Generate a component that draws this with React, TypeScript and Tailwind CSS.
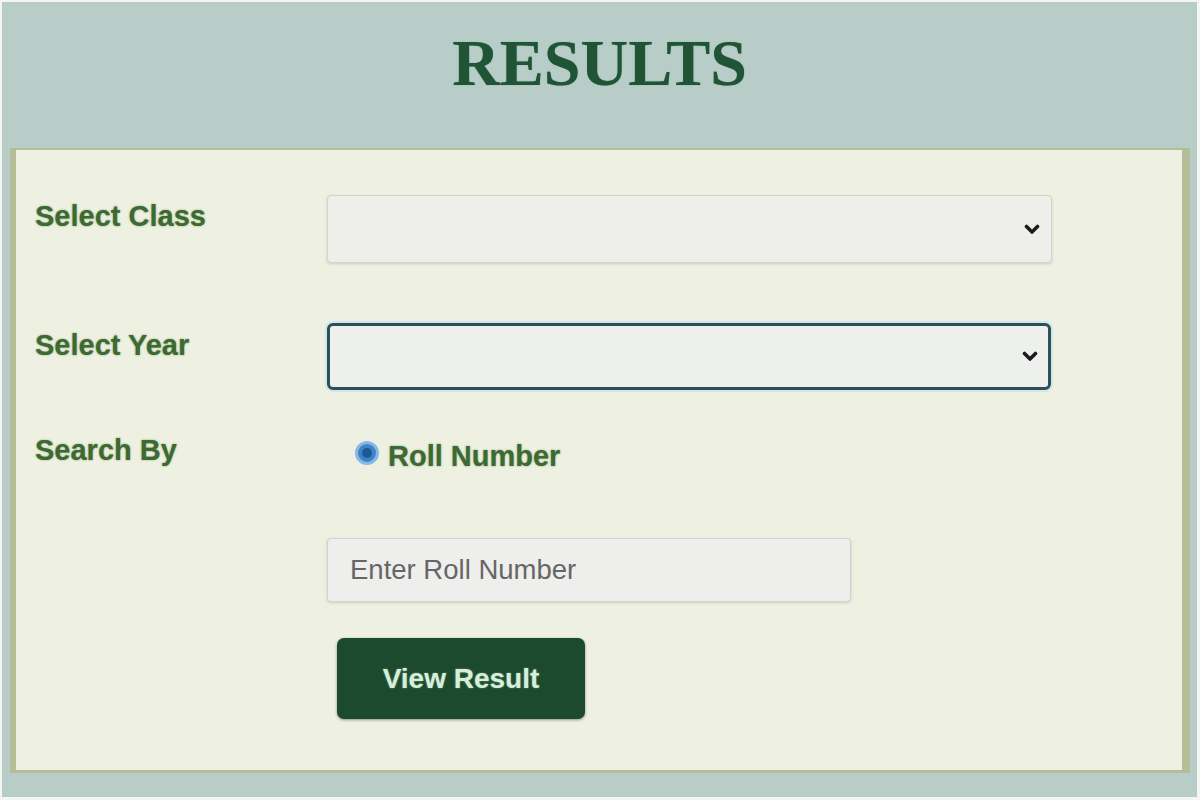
import React from "react";

function Chevron() {
  return (
    <svg width="16" height="11" viewBox="0 0 16 11" fill="none">
      <path d="M2.5 2.5 L8 8 L13.5 2.5" stroke="#1c1c1c" strokeWidth="3.6" strokeLinecap="round" strokeLinejoin="round" />
    </svg>
  );
}

export default function App() {
  const sans = { fontFamily: '"Liberation Sans", Arial, sans-serif' };
  const label =
    "text-[29px] leading-[32px] font-bold text-[#3d6a30] [text-shadow:0_0_2px_rgba(40,90,30,0.55)]";
  return (
    <div className="w-[1200px] h-[800px] bg-[#f4f6f4] pl-[2px] pt-[2px] pr-[3px] pb-[3px]" style={sans}>
      <div className="w-full h-full bg-[#b9cdc8] flex flex-col">
        <div className="h-[146px] flex justify-center pt-[28px]">
          <h1
            className="text-[66px] leading-[66px] font-bold text-[#1f5536] [text-shadow:0_0_1px_rgba(31,85,54,0.5)]"
            style={{ fontFamily: '"Liberation Serif", "Times New Roman", serif' }}
          >
            RESULTS
          </h1>
        </div>
        <div className="ml-[8px] mr-[7px] h-[625px] bg-[#eef0e2] border-l-[6px] border-r-[8px] border-t-[2px] border-b-[3px] border-[#b4bd96] pl-[19px] pt-[45px] flex flex-col">
          {/* Row 1 */}
          <div className="flex items-start">
            <div className={"w-[292px] mt-[5px] " + label}>Select Class</div>
            <div className="w-[725px] h-[68px] bg-[#eeeeeb] border border-[#d3d5cf] rounded-[4px] shadow-[0_1px_3px_rgba(0,0,0,0.15)] flex items-center justify-end pr-[11px]">
              <Chevron />
            </div>
          </div>
          {/* Row 2 */}
          <div className="flex items-start mt-[60px]">
            <div className={"w-[292px] mt-[6px] " + label}>Select Year</div>
            <div className="w-[724px] h-[67px] bg-[#eef0ee] border-[3px] border-[#2d4f58] rounded-[6px] shadow-[0_0_0_2px_#cfe6ea] flex items-center justify-end pr-[10px]">
              <Chevron />
            </div>
          </div>
          {/* Row 3 */}
          <div className="flex items-start mt-[44px]">
            <div className={"w-[292px] " + label}>Search By</div>
            <div className="flex items-start ml-[28px]">
              <div className="mt-[7px] w-[24px] h-[24px] rounded-full border-[3px] border-[#86b9e6] bg-[#3f82c6] flex items-center justify-center">
                <div className="w-[10px] h-[10px] rounded-full bg-[#1b5996]" />
              </div>
              <div className={"ml-[9px] mt-[6px] " + label}>Roll Number</div>
            </div>
          </div>
          {/* Input */}
          <div className="ml-[292px] mt-[66px] w-[524px] h-[64px] bg-[#eeefec] border border-[#d2d4cf] rounded-[4px] shadow-[0_1px_3px_rgba(0,0,0,0.15)] flex items-center pl-[22px]">
            <span className="text-[27.5px] text-[#666666]">Enter Roll Number</span>
          </div>
          {/* Button */}
          <div className="ml-[302px] mt-[36px] w-[248px] h-[81px] bg-[#1c4a2d] rounded-[7px] shadow-[0_1px_3px_rgba(0,0,0,0.4)] flex items-center justify-center">
            <span className="text-[28px] font-bold text-[#d7eedb] [text-shadow:0_0_2px_rgba(200,240,210,0.5)]">View Result</span>
          </div>
        </div>
      </div>
    </div>
  );
}
